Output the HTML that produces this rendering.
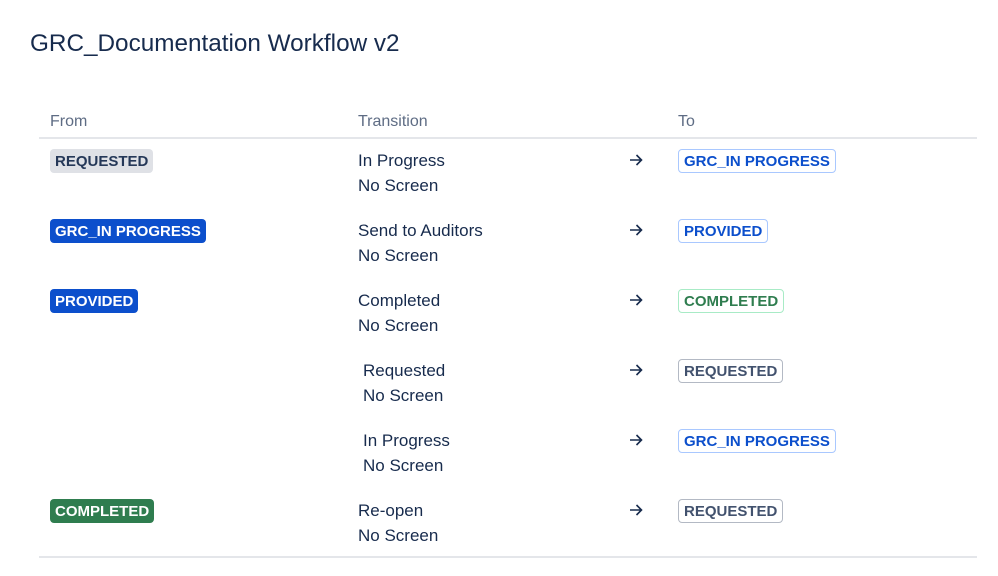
<!DOCTYPE html>
<html><head><meta charset="utf-8"><style>
body{margin:0;width:998px;height:576px;background:#fff;font-family:"Liberation Sans",Arial,sans-serif;position:relative;overflow:hidden}
.a{position:absolute;white-space:nowrap}
h1{position:absolute;left:30px;top:30px;margin:0;font-size:24.3px;font-weight:400;color:#172b4d}
.h{font-size:16px;color:#5e6c84;top:113px}
.line{position:absolute;left:39px;width:938px;height:2px;background:#e4e6ea}
.t{font-size:17px;color:#172b4d;line-height:25px}
.l{position:absolute;height:24px;line-height:25px;padding:0 5px;border-radius:4px;font-size:15px;font-weight:700;box-sizing:border-box}
.gr{background:#dfe1e6;color:#253858}
.bl{background:#0c4fcc;color:#fff}
.gn{background:#2f7d4f;color:#fff}
.obl{border:1px solid #a9c8ff;color:#0c4fcc;background:#fff;line-height:23px}
.ogn{border:1px solid #a8ebc6;color:#2f7d4f;background:#fff;line-height:23px}
.ogr{border:1px solid #b3b9c4;color:#42526e;background:#fff;line-height:23px}
svg.ar{position:absolute;left:629px}
</style></head><body>
<h1>GRC_Documentation Workflow v2</h1>
<div class="a h" style="left:50px">From</div>
<div class="a h" style="left:358px">Transition</div>
<div class="a h" style="left:678px">To</div>
<div class="line" style="top:137px"></div>
<div class="line" style="top:556px"></div>

<div class="l gr" style="left:50px;top:149px">REQUESTED</div>
<div class="l bl" style="left:50px;top:219px">GRC_IN PROGRESS</div>
<div class="l bl" style="left:50px;top:289px">PROVIDED</div>
<div class="l gn" style="left:50px;top:499px">COMPLETED</div>

<div class="a t" style="left:358px;top:148px">In Progress<br>No Screen</div>
<div class="a t" style="left:358px;top:218px">Send to Auditors<br>No Screen</div>
<div class="a t" style="left:358px;top:288px">Completed<br>No Screen</div>
<div class="a t" style="left:363px;top:358px">Requested<br>No Screen</div>
<div class="a t" style="left:363px;top:428px">In Progress<br>No Screen</div>
<div class="a t" style="left:358px;top:498px">Re-open<br>No Screen</div>

<svg class="ar" style="top:154px" width="14" height="12" viewBox="0 0 14 12"><path d="M1 6H12.5M7.5 1L12.5 6L7.5 11" fill="none" stroke="#172b4d" stroke-width="1.6"/></svg>
<svg class="ar" style="top:224px" width="14" height="12" viewBox="0 0 14 12"><path d="M1 6H12.5M7.5 1L12.5 6L7.5 11" fill="none" stroke="#172b4d" stroke-width="1.6"/></svg>
<svg class="ar" style="top:294px" width="14" height="12" viewBox="0 0 14 12"><path d="M1 6H12.5M7.5 1L12.5 6L7.5 11" fill="none" stroke="#172b4d" stroke-width="1.6"/></svg>
<svg class="ar" style="top:364px" width="14" height="12" viewBox="0 0 14 12"><path d="M1 6H12.5M7.5 1L12.5 6L7.5 11" fill="none" stroke="#172b4d" stroke-width="1.6"/></svg>
<svg class="ar" style="top:434px" width="14" height="12" viewBox="0 0 14 12"><path d="M1 6H12.5M7.5 1L12.5 6L7.5 11" fill="none" stroke="#172b4d" stroke-width="1.6"/></svg>
<svg class="ar" style="top:504px" width="14" height="12" viewBox="0 0 14 12"><path d="M1 6H12.5M7.5 1L12.5 6L7.5 11" fill="none" stroke="#172b4d" stroke-width="1.6"/></svg>

<div class="l obl" style="left:678px;top:149px">GRC_IN PROGRESS</div>
<div class="l obl" style="left:678px;top:219px">PROVIDED</div>
<div class="l ogn" style="left:678px;top:289px">COMPLETED</div>
<div class="l ogr" style="left:678px;top:359px">REQUESTED</div>
<div class="l obl" style="left:678px;top:429px">GRC_IN PROGRESS</div>
<div class="l ogr" style="left:678px;top:499px">REQUESTED</div>
</body></html>
